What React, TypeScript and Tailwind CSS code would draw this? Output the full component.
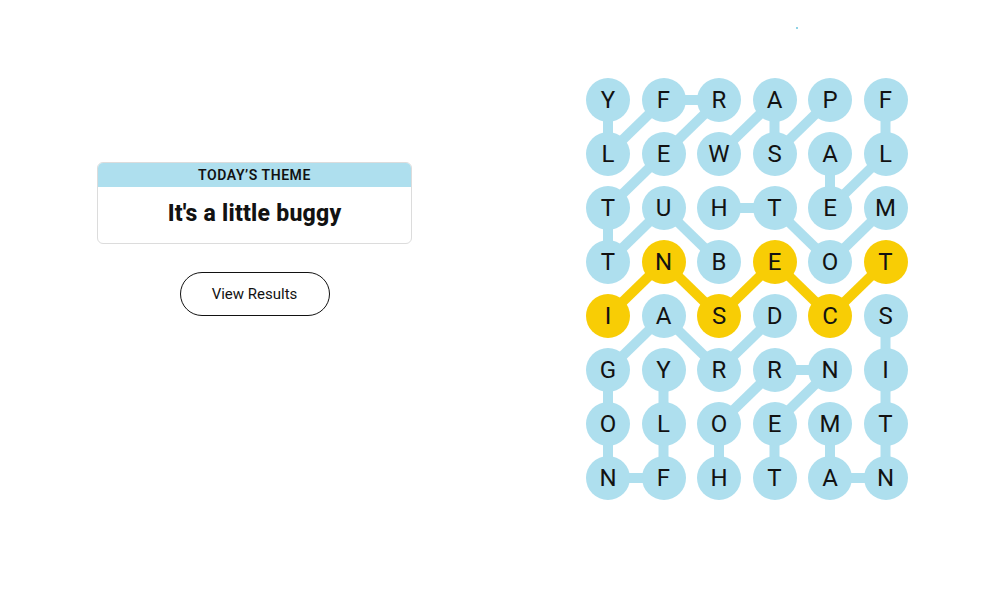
import React from "react";

const GRID = [
  "YFRAPF",
  "LEWSAL",
  "TUHTEM",
  "TNBEOT",
  "IASDCS",
  "GYRRNI",
  "OLOEMT",
  "NFHTAN",
];

type P = [number, number];
const WORDS: { path: P[]; spangram?: boolean }[] = [
  { path: [[3, 2], [2, 1], [3, 0], [2, 0], [1, 1], [0, 2], [0, 1], [1, 0], [0, 0]] },
  { path: [[1, 2], [0, 3], [1, 3], [0, 4]] },
  { path: [[0, 5], [1, 5], [2, 4], [1, 4]] },
  { path: [[2, 5], [3, 4], [2, 3], [2, 2]] },
  { path: [[4, 0], [3, 1], [4, 2], [3, 3], [4, 4], [3, 5]], spangram: true },
  { path: [[4, 3], [5, 2], [4, 1], [5, 0], [6, 0], [7, 0], [7, 1], [6, 1], [5, 1]] },
  { path: [[6, 4], [7, 4], [7, 5], [6, 5], [5, 5], [4, 5]] },
  { path: [[7, 2], [6, 2], [5, 3], [5, 4], [6, 3], [7, 3]] },
];

const BLUE = "#aedfee";
const YELLOW = "#f8cd05";
const DX = 55.5;
const DY = 54;
const R = 22;

const yellowSet = new Set<string>();
WORDS.forEach((w) => {
  if (w.spangram) w.path.forEach(([r, c]) => yellowSet.add(`${r}-${c}`));
});

function Board() {
  const width = DX * 5 + 44;
  const height = DY * 7 + 44;
  return (
    <div className="relative">
      <svg
        className="absolute left-0 top-0"
        width={width}
        height={height}
        viewBox={`0 0 ${width} ${height}`}
      >
        {WORDS.map((w, i) =>
          w.path.slice(1).map(([r, c], j) => {
            const [pr, pc] = w.path[j];
            return (
              <line
                key={`${i}-${j}`}
                x1={R + pc * DX}
                y1={R + pr * DY}
                x2={R + c * DX}
                y2={R + r * DY}
                stroke={w.spangram ? YELLOW : BLUE}
                strokeWidth={10}
              />
            );
          })
        )}
      </svg>
      <div className="relative grid grid-cols-[repeat(6,44px)] gap-x-[11.5px] gap-y-[10px]">
        {GRID.map((row, r) =>
          row.split("").map((ch, c) => (
            <div
              key={`${r}-${c}`}
              className={`flex h-[44px] w-[44px] items-center justify-center rounded-full text-[24px] leading-none text-[#121212] ${
                yellowSet.has(`${r}-${c}`) ? "bg-[#f8cd05]" : "bg-[#aedfee]"
              }`}
            >
              {ch}
            </div>
          ))
        )}
      </div>
    </div>
  );
}

export default function App() {
  return (
    <div
      className="relative min-h-[594px] w-[996px] bg-white"
      style={{ fontFamily: "Roboto, 'Liberation Sans', sans-serif" }}
    >
      <div className="absolute left-[796px] top-[27px] h-[2px] w-[2px] bg-[#8fd3e6]" />
      <div className="flex pt-[78px]">
        <div className="flex w-[508px] flex-col items-center pt-[84px] pl-[1px]">
          <div className="w-[315px] overflow-hidden rounded-[6px] border border-[#dcdcdc]">
            <div className="flex h-[24px] items-center justify-center bg-[#aedfee] text-[14px] font-semibold tracking-[0.04em] text-[#121212]">
              TODAY’S THEME
            </div>
            <div className="flex h-[56px] items-center justify-center pb-[2px] text-[23px] font-extrabold tracking-[0.01em] text-[#121212]">
              It's a little buggy
            </div>
          </div>
          <button className="mt-[28px] h-[44px] w-[150px] rounded-full border border-[#121212] bg-white text-[15px] text-[#121212]">
            View Results
          </button>
        </div>
        <div className="ml-[78px]">
          <Board />
        </div>
      </div>
    </div>
  );
}
